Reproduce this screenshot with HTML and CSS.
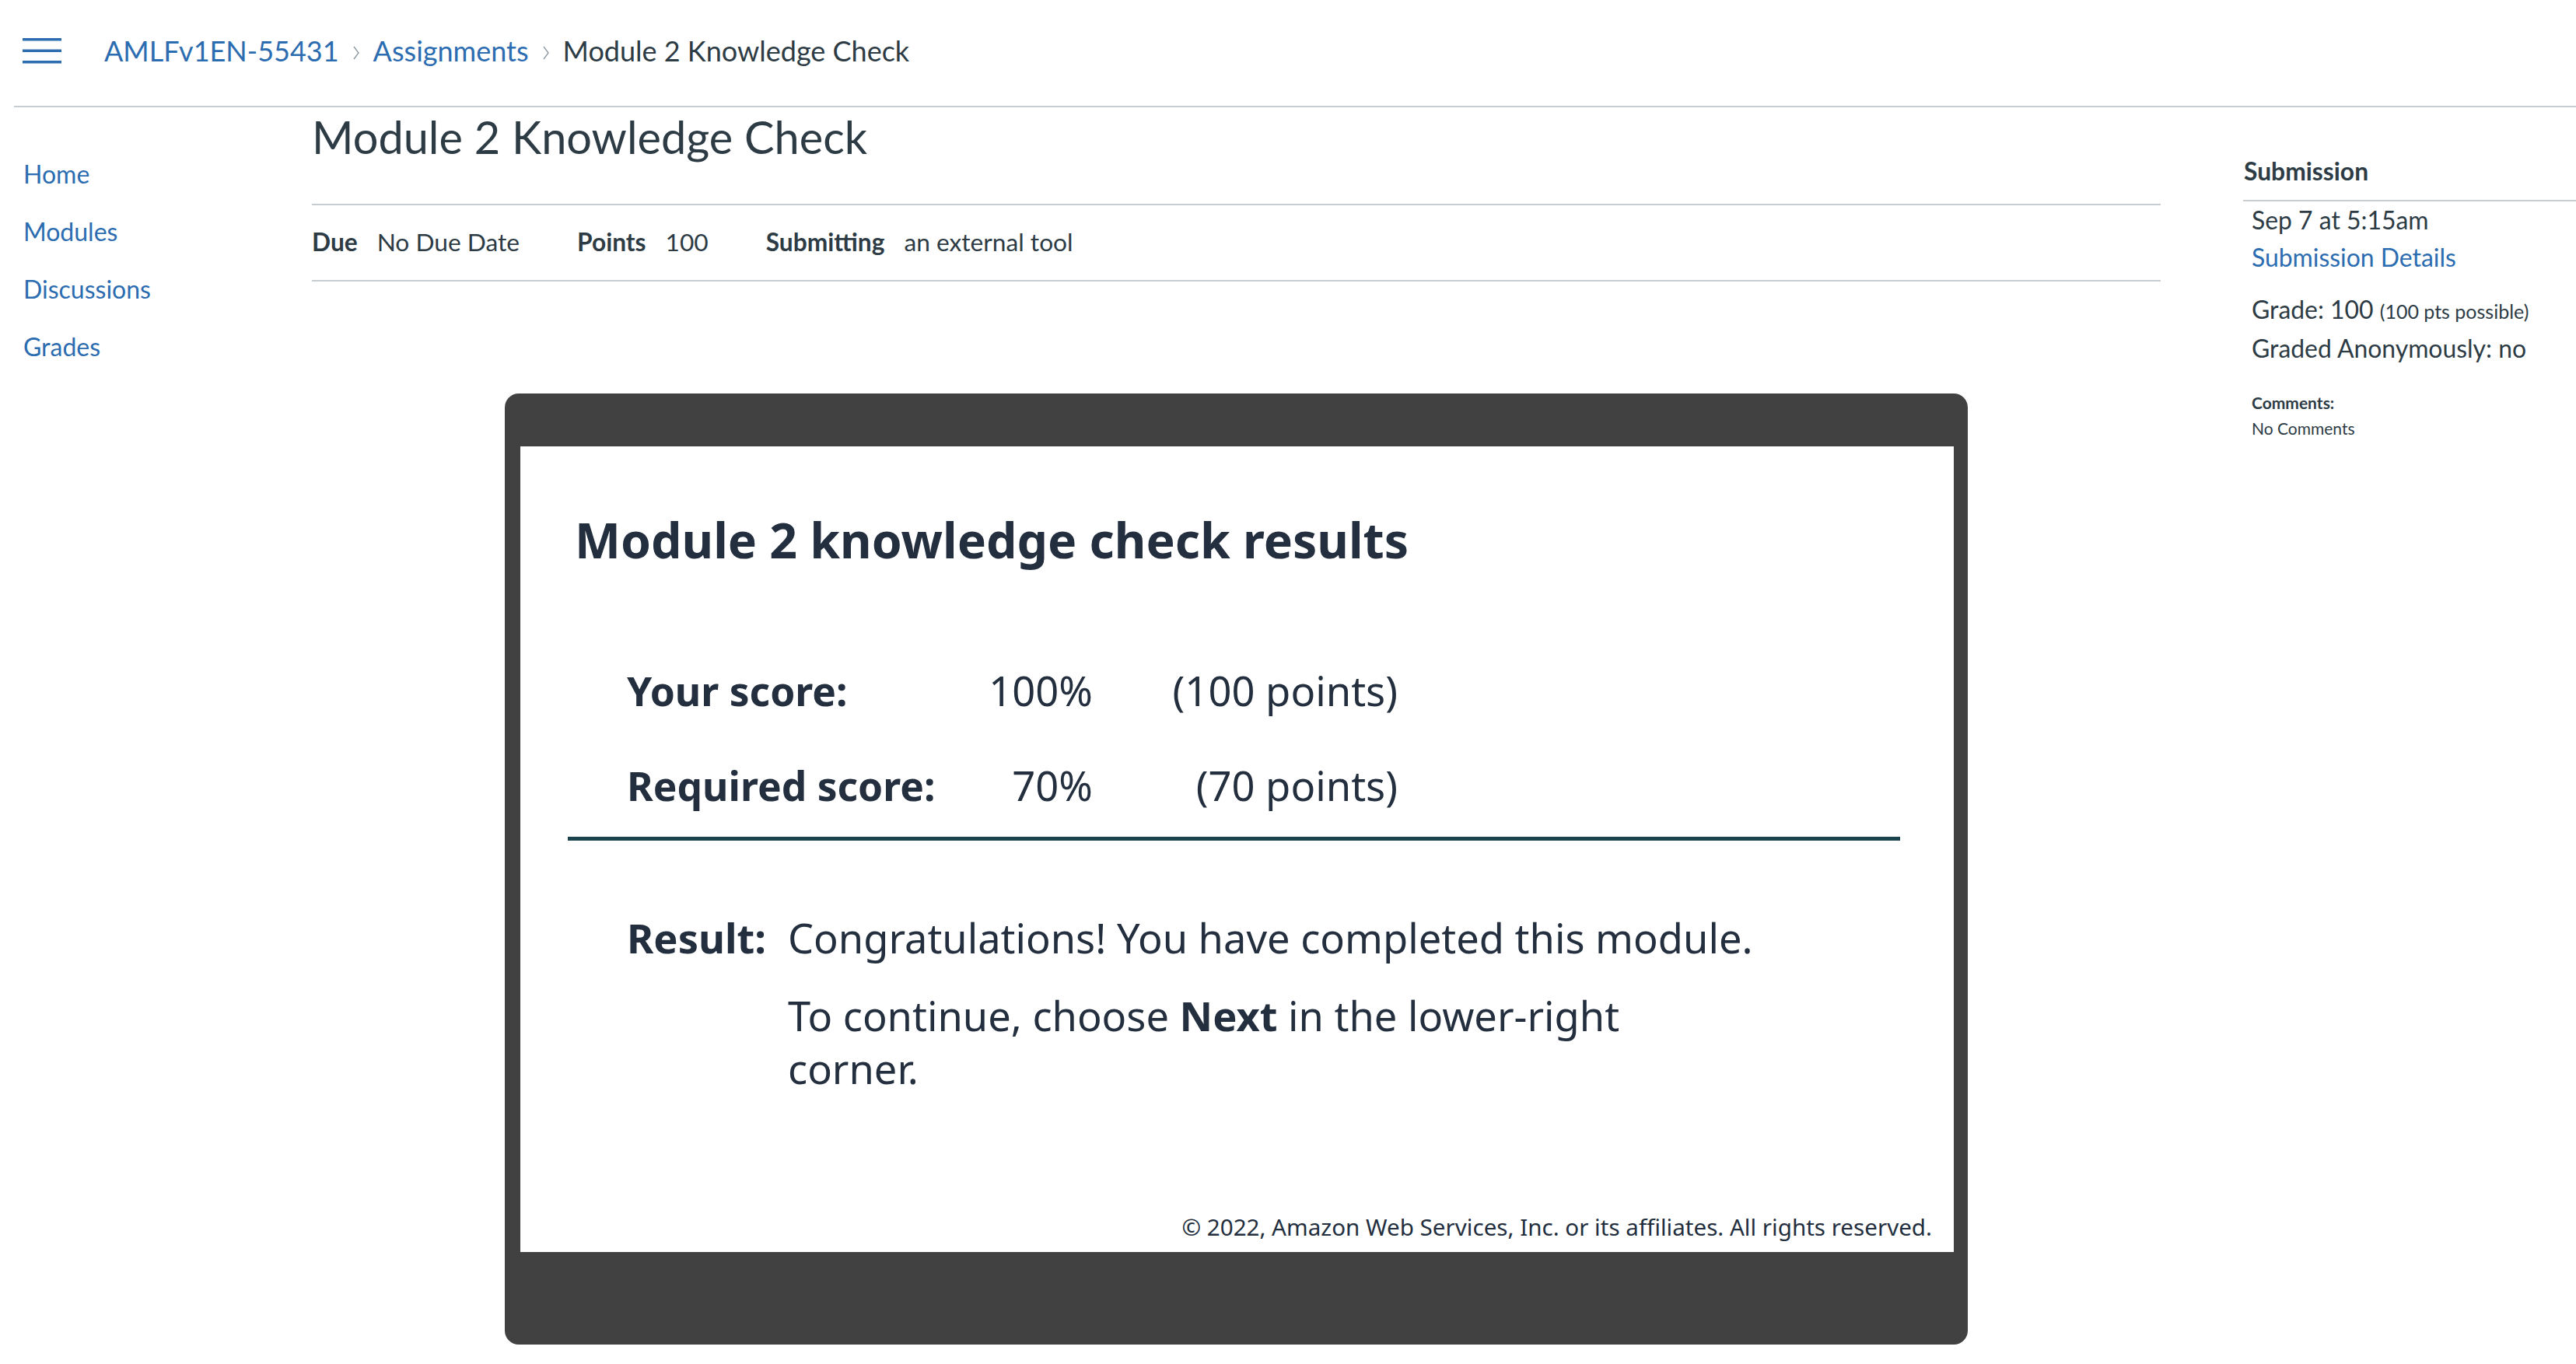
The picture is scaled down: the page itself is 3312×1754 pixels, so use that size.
FILE: index.html
```html
<!DOCTYPE html>
<html lang="en">
<head>
<meta charset="utf-8">
<title>Module 2 Knowledge Check</title>
<link rel="stylesheet" href="styles.css">
</head>
<body>
<header class="topbar">
  <button class="menu" aria-label="Menu">
    <svg width="50" height="34" viewBox="0 0 50 34"><rect x="0" y="0" width="50" height="3.5" fill="#2c6cb0"/><rect x="0" y="14.5" width="50" height="3.5" fill="#2c6cb0"/><rect x="0" y="29" width="50" height="3.5" fill="#2c6cb0"/></svg>
  </button>
  <nav class="crumbs">
    <a class="crumb-link" href="#">AMLFv1EN-55431</a>
    <span class="sep"><svg width="8" height="18" viewBox="0 0 8 18"><path d="M1 1 L7 9 L1 17" fill="none" stroke="#8b969e" stroke-width="1.3"/></svg></span>
    <a class="crumb-link" href="#">Assignments</a>
    <span class="sep"><svg width="8" height="18" viewBox="0 0 8 18"><path d="M1 1 L7 9 L1 17" fill="none" stroke="#8b969e" stroke-width="1.3"/></svg></span>
    <span class="crumb-current">Module 2 Knowledge Check</span>
  </nav>
</header>
<div class="layout">
  <nav class="sidenav">
    <a href="#">Home</a>
    <a href="#">Modules</a>
    <a href="#">Discussions</a>
    <a href="#">Grades</a>
  </nav>
  <main class="content">
    <h1 class="title">Module 2 Knowledge Check</h1>
    <div class="details">
      <div class="detail"><span class="label">Due</span><span>No Due Date</span></div>
      <div class="detail"><span class="label">Points</span><span>100</span></div>
      <div class="detail"><span class="label">Submitting</span><span>an external tool</span></div>
    </div>
    <div class="tool">
      <div class="tool-body">
        <h2 class="tool-title">Module 2 knowledge check results</h2>
        <div class="scores">
          <div class="s-label">Your score:</div><div class="s-pct">100%</div><div class="s-pts">(100 points)</div>
          <div class="s-label">Required score:</div><div class="s-pct">70%</div><div class="s-pts">(70 points)</div>
        </div>
        <div class="divider"></div>
        <div class="result">
          <div class="r-label">Result:</div>
          <div class="r-text">
            <p class="r-line">Congratulations! You have completed this module.</p>
            <p class="r-next">To continue, choose <strong>Next</strong> in the lower-right corner.</p>
          </div>
        </div>
        <p class="copyright">© 2022, Amazon Web Services, Inc. or its affiliates. All rights reserved.</p>
      </div>
    </div>
  </main>
  <aside class="sidebar">
    <h2 class="side-title">Submission</h2>
    <div class="side-body">
      <div class="side-line">Sep 7 at 5:15am</div>
      <div class="side-line"><a href="#">Submission Details</a></div>
      <div class="side-grade">
        <div class="side-line">Grade: 100 <span class="small">(100 pts possible)</span></div>
        <div class="side-line">Graded Anonymously: no</div>
      </div>
      <div class="comments">
        <div class="c-title">Comments:</div>
        <div class="c-text">No Comments</div>
      </div>
    </div>
  </aside>
</div>
</body>
</html>
```

FILE: styles.css
```css
* { box-sizing: border-box; }
html, body { margin: 0; padding: 0; background: #fff; }
body {
  font-family: Lato, "Liberation Sans", sans-serif;
  color: #2d3b45;
  width: 3312px;
  height: 1754px;
  overflow: hidden;
}
a { color: #2c6cb0; text-decoration: none; }

.topbar {
  margin-left: 18px;
  height: 138px;
  border-bottom: 2px solid #c7cdd1;
  display: flex;
  align-items: center;
  padding-bottom: 4px;
}
.menu {
  border: 0;
  background: none;
  padding: 0;
  margin-left: 11px;
  width: 50px;
  height: 34px;
  display: flex;
}
.crumbs {
  margin-left: 55px;
  display: flex;
  align-items: center;
  font-size: 36px;
  line-height: 1.2;
}
.crumb-link { color: #2c6cb0; }
.crumb-current { color: #2d3b45; }
.sep { display: flex; margin: 0 18px 0 18px; padding-top: 4px; }

.layout {
  display: grid;
  grid-template-columns: 401px 2377px 106px 428px;
}
.sidenav {
  display: flex;
  flex-direction: column;
  padding: 49px 0 0 30px;
  font-size: 32px;
}
.sidenav a { line-height: 74px; }

.content { grid-column: 2; }
.title {
  margin: 3px 0 0;
  font-size: 57.7px;
  font-weight: 400;
  line-height: 1.2;
  padding-bottom: 52px;
  border-bottom: 2px solid #c7cdd1;
}
.details {
  display: flex;
  align-items: center;
  gap: 74px;
  height: 98px;
  border-bottom: 2px solid #c7cdd1;
  font-size: 31.7px;
  padding-bottom: 2px;
}
.detail .label { font-weight: 700; margin-right: 25px; }

.tool {
  width: 1881px;
  margin: 144px 0 0 248px;
  background: #414141;
  border-radius: 18px;
  padding: 68px 18px 119px 20px;
}
.tool-body {
  background: #fff;
  height: 1036px;
  display: flex;
  flex-direction: column;
  color: #232f3e;
  font-family: "Noto Sans", "Open Sans", sans-serif;
  padding: 80px 28px 12px 70px;
}
.tool-title {
  margin: 0;
  font-size: 62.5px;
  font-weight: 700;
  line-height: 80px;
}
.scores {
  margin: 93px 0 0 67px;
  display: grid;
  grid-template-columns: 419px 180px 392px;
  grid-auto-rows: 122px;
  align-items: center;
  font-size: 52.5px;
  line-height: 122px;
}
.s-label { font-weight: 700; font-size: 51.5px; }
.s-pct, .s-pts { text-align: right; }
.divider {
  margin: 5px 41px 0 -9px;
  height: 5px;
  background: #1b434d;
}
.result {
  margin: 91px 0 0 67px;
  display: flex;
  font-size: 52.4px;
  line-height: 68px;
}
.r-label { font-weight: 700; width: 207px; flex: none; }
.r-text p { margin: 0; }
.r-next { margin-top: 32px !important; width: 1120px; }
.r-next strong { font-weight: 700; }
.copyright {
  margin: auto 0 0;
  text-align: right;
  font-size: 29.6px;
  line-height: 40px;
}

.sidebar { grid-column: 4; padding-top: 59px; }
.side-title {
  margin: 0;
  font-size: 31.8px;
  font-weight: 700;
  line-height: 47px;
  padding: 0 0 13px 1px;
  border-bottom: 2px solid #c7cdd1;
}
.side-body { padding-left: 11px; font-size: 31.9px; }
.side-line { line-height: 48px; }
.side-grade { margin-top: 19px; }
.small { font-size: 25px; }
.comments { margin-top: 29px; font-size: 21px; line-height: 33px; }
.c-title { font-weight: 700; }
```
